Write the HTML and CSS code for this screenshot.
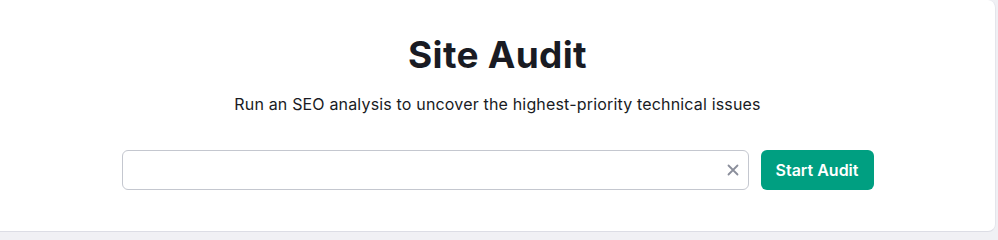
FILE: index.html
```html
<!DOCTYPE html>
<html lang="en">
<head>
<meta charset="utf-8">
<title>Site Audit</title>
<link rel="stylesheet" href="styles.css">
</head>
<body>
<div class="page">
  <section class="card">
    <h1 class="title">Site Audit</h1>
    <p class="subtitle">Run an SEO analysis to uncover the highest-priority technical issues</p>
    <form class="audit-form" onsubmit="return false">
      <div class="field">
        <input class="field-input" type="text" aria-label="Domain">
        <button class="field-clear" type="button" aria-label="Clear">
          <svg width="12" height="12" viewBox="0 0 12 12"><path d="M1.5 1.5 L10.5 10.5 M10.5 1.5 L1.5 10.5" stroke="#8a8e9b" stroke-width="1.8" stroke-linecap="round"/></svg>
        </button>
      </div>
      <button class="start-btn" type="submit">Start Audit</button>
    </form>
  </section>
</div>
</body>
</html>
```

FILE: styles.css
```css
html, body {
  margin: 0;
  padding: 0;
}
body {
  background: #f0f0f4;
  font-family: Inter, "Noto Sans", "Liberation Sans", sans-serif;
  color: #191b23;
}
.page {
  width: 998px;
  height: 234px;
  overflow: hidden;
}
.card {
  box-sizing: border-box;
  width: 1006px;
  height: 232px;
  margin-left: -10px;
  background: #ffffff;
  border-radius: 0 8px 8px 0;
  border-right: 1px solid #e4e5eb;
  border-bottom: 1px solid #dcdde5;
  padding-top: 32px;
  padding-left: 10px;
  display: flex;
  flex-direction: column;
  align-items: center;
}
.title {
  margin: 0;
  font-size: 37px;
  line-height: 46px;
  font-weight: 700;
  letter-spacing: 0.3px;
  color: #191b23;
}
.subtitle {
  margin: 14px 0 0;
  font-size: 16px;
  line-height: 24px;
  letter-spacing: 0.17px;
  color: #191b23;
}
.audit-form {
  margin-top: 34px;
  display: flex;
  gap: 12px;
  margin-left: 0;
}
.field {
  position: relative;
  width: 627px;
  height: 40px;
}
.field-input {
  box-sizing: border-box;
  width: 100%;
  height: 40px;
  border: 1px solid #c4c7cf;
  border-radius: 6px;
  padding: 0 36px 0 12px;
  font: inherit;
  font-size: 16px;
  outline: none;
  background: #fff;
}
.field-clear {
  position: absolute;
  right: 4px;
  top: 8px;
  width: 24px;
  height: 24px;
  border: 0;
  padding: 0;
  background: transparent;
  display: flex;
  align-items: center;
  justify-content: center;
}
.start-btn {
  box-sizing: border-box;
  height: 40px;
  width: 113px;
  border: 0;
  border-radius: 6px;
  background: #009f81;
  color: #ffffff;
  font-family: Inter, "Noto Sans", "Liberation Sans", sans-serif;
  font-size: 16px;
  font-weight: 600;
  padding: 0;
}
```
